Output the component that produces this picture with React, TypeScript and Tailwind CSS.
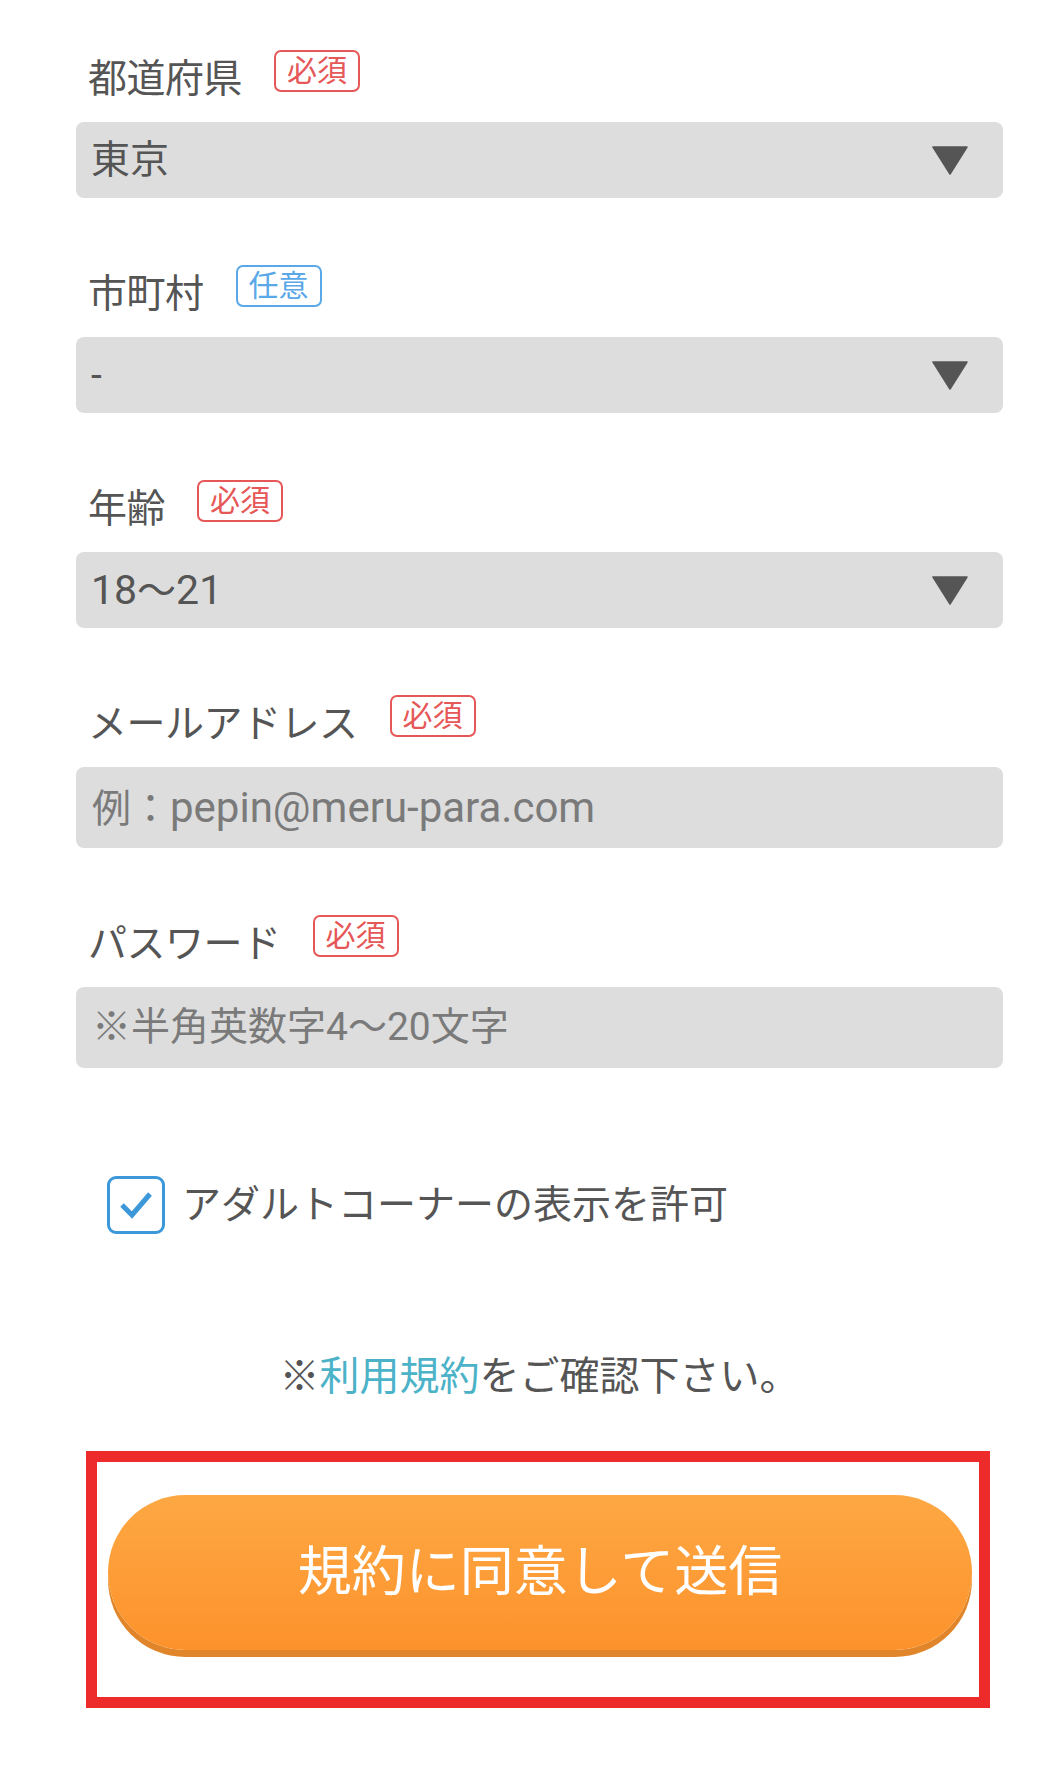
import React from 'react';

type Field = {
  label: string;
  required: boolean;
  kind: 'select' | 'input';
  value?: React.ReactNode;
  placeholder?: React.ReactNode;
};

const fields: Field[] = [
  { label: '都道府県', required: true, kind: 'select', value: '東京' },
  { label: '市町村', required: false, kind: 'select', value: '-' },
  {
    label: '年齢',
    required: true,
    kind: 'select',
    value: (
      <>
        <span className="text-[41px]">18</span>～<span className="text-[41px]">21</span>
      </>
    ),
  },
  {
    label: 'メールアドレス',
    required: true,
    kind: 'input',
    placeholder: (
      <>
        例：<span className="text-[42px]">pepin@meru-para.com</span>
      </>
    ),
  },
  { label: 'パスワード', required: true, kind: 'input', placeholder: '※半角英数字4～20文字' },
];

const Badge: React.FC<{ required: boolean }> = ({ required }) =>
  required ? (
    <span className="h-[42px] px-[11px] flex items-center rounded-[7px] border-[2.5px] border-[#e65757] text-[#e65757] text-[30px] leading-none">
      必須
    </span>
  ) : (
    <span className="h-[42px] px-[11px] flex items-center rounded-[7px] border-[2.5px] border-[#5aa8e8] text-[#5aa8e8] text-[30px] leading-none">
      任意
    </span>
  );

const Caret = () => (
  <svg width="36" height="29" viewBox="0 0 36 29" className="shrink-0">
    <polygon points="1,1 35,1 18,28" fill="#555555" stroke="#555555" strokeWidth="1.5" strokeLinejoin="round" />
  </svg>
);

export default function App() {
  return (
    <div className="min-h-[1788px] bg-white font-[Roboto,'Noto_Sans_CJK_JP',sans-serif] text-[#555]">
      <div className="pl-[76px] pr-[57px] pt-[50px]">
        {fields.map((f) => (
          <div key={f.label} className="mb-[67px]">
            <div className="h-[58px] flex items-start gap-[32px] pl-[12px] mb-[14px]">
              <span className="text-[39px] leading-[58px] tracking-[-0.5px]">{f.label}</span>
              <Badge required={f.required} />
            </div>
            {f.kind === 'select' ? (
              <div className="h-[76px] rounded-[8px] bg-[#dddddd] flex items-center justify-between pl-[15px] pr-[35px]">
                <span className="text-[39px] leading-none">{f.value}</span>
                <Caret />
              </div>
            ) : (
              <div className="h-[81px] rounded-[8px] bg-[#dddddd] flex items-center pl-[16px] text-[39px] leading-none text-[#7a7a7a]">
                <span>{f.placeholder}</span>
              </div>
            )}
          </div>
        ))}

        <label className="flex items-center gap-[17px] ml-[31px] mt-[108px]">
          <span className="w-[58px] h-[58px] rounded-[9px] border-[3px] border-[#3c98d8] flex items-center justify-center">
            <svg width="34" height="28" viewBox="0 0 34 28">
              <polyline points="3,14 13,24 31,3" fill="none" stroke="#3c98d8" strokeWidth="5" />
            </svg>
          </span>
          <span className="text-[39px] leading-none">アダルトコーナーの表示を許可</span>
        </label>

        <p className="mt-[113px] h-[60px] leading-[60px] text-center text-[40px]">
          ※<span className="text-[#4bb2c8]">利用規約</span>をご確認下さい。
        </p>

        <div className="mt-[44px] ml-[10px] w-[904px] border-[11px] border-[#ee2b2b] pt-[33px] pb-[47px]">
          <button className="ml-[11px] w-[864px] h-[155px] rounded-full bg-gradient-to-b from-[#fda843] to-[#fd922b] shadow-[0_7px_0_#e0852a] text-white text-[54px] leading-none">
            規約に同意して送信
          </button>
        </div>
      </div>
    </div>
  );
}
